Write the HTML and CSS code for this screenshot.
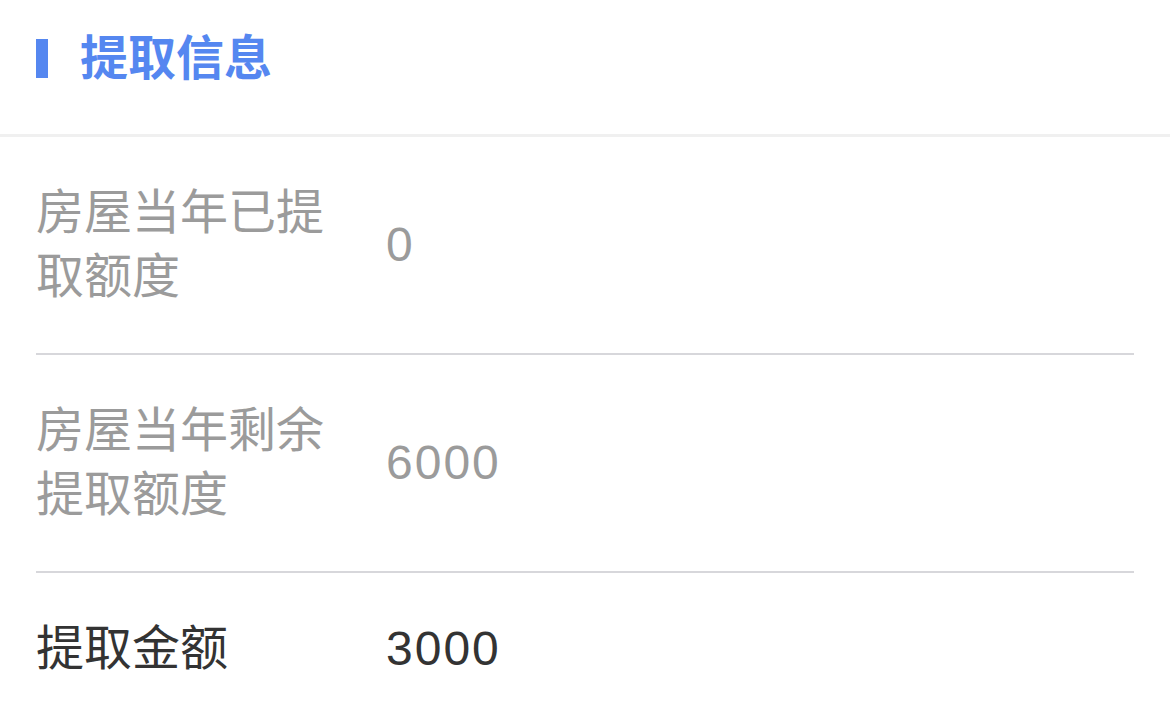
FILE: index.html
```html
<!DOCTYPE html>
<html lang="zh-CN">
<head>
<meta charset="utf-8">
<title>提取信息</title>
<link rel="stylesheet" href="styles.css">
</head>
<body>
  <section class="panel">
    <header class="panel-head">
      <span class="mark"></span>
      <h2 class="panel-title">提取信息</h2>
    </header>
    <div class="rows">
      <div class="row">
        <div class="label">房屋当年已提取额度</div>
        <div class="value">0</div>
      </div>
      <div class="row">
        <div class="label">房屋当年剩余提取额度</div>
        <div class="value">6000</div>
      </div>
      <div class="row row-active">
        <div class="label">提取金额</div>
        <div class="value">3000</div>
      </div>
    </div>
  </section>
</body>
</html>
```
FILE: styles.css
```css
html, body {
  margin: 0;
  padding: 0;
  background: #ffffff;
}

body {
  font-family: "Liberation Sans", "Noto Sans CJK SC", sans-serif;
  overflow: hidden;
}

.panel-head {
  height: 137px;
  box-sizing: border-box;
  padding: 35px 0 0 36px;
  display: flex;
  align-items: flex-start;
  border-bottom: 3px solid #f0f0f0;
}

.mark {
  width: 12px;
  height: 39px;
  margin-top: 4px;
  background: #5587f0;
}

.panel-title {
  margin: 0 0 0 32px;
  font-size: 48px;
  line-height: 48px;
  font-weight: 700;
  color: #5587f0;
}

.rows {
  margin: 0 36px;
}

.row {
  display: grid;
  grid-template-columns: 350px 1fr;
  align-items: center;
  padding: 44px 0;
  border-bottom: 2px solid #d7d7db;
  color: #9b9b9b;
  font-size: 48px;
  line-height: 64px;
}

.row:last-child {
  border-bottom: none;
}

.label {
  max-width: 300px;
}

.value {
  letter-spacing: 2px;
}

.row-active {
  color: #333333;
}
```
